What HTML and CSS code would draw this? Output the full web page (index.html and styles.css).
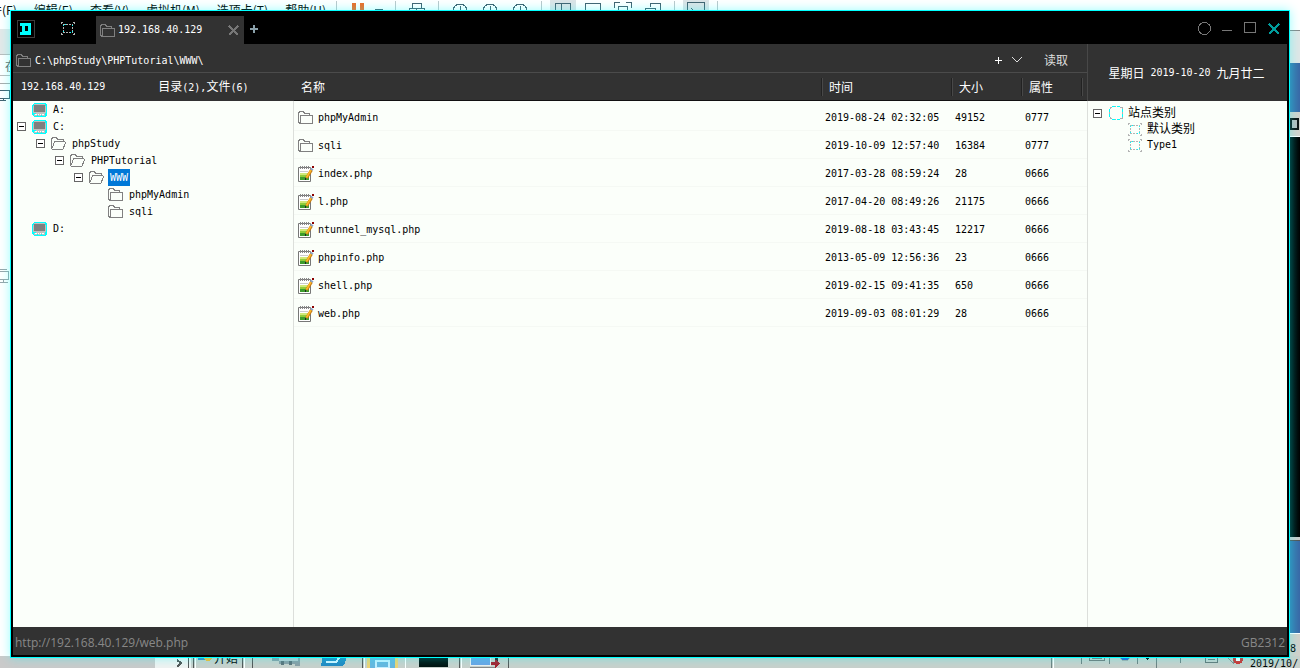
FILE: index.html
```html
<!DOCTYPE html>
<html lang="zh-CN">
<head>
<meta charset="utf-8">
<title>192.168.40.129</title>
<link rel="stylesheet" href="styles.css">
</head>
<body>
<svg class="sprite" aria-hidden="true">
  <symbol id="folder" viewBox="0 0 15 13"><path d="M0.5 11V2L2 .5H5L6.500 2H11.500V4.500M.5 11L2 12.500M2.500 4.500H14.500V12.500H2.500Z" fill="none" stroke="#808080"/></symbol>
  <symbol id="folder-open" viewBox="0 0 15 13"><path d="M.5 11.500V2L2 .5H5L6.500 2H12.500V4M3.500 4.500H13.500L14.500 5.500L12.500 11L11.500 12.500H1.500L.5 11.500L2.500 8Z" fill="none" stroke="#808080"/></symbol>
  <symbol id="drive" viewBox="0 0 15 14"><path d="M2 0H13L15 2V12L13 14H2L0 12V2Z" fill="#00ffff"/><path d="M2 1H13V3H14V10H13V13H2V10H1V3H2Z" fill="#c0c0c0"/><path d="M2 2H13V9H2Z" fill="#808080"/><path d="M3 11H5V12H3ZM6 11H7V12H6ZM8 11H9V12H8ZM10 11H12V12H10Z" fill="#fff"/><path d="M2 10H4V11H2ZM5 12H6V13H5ZM9 12H10V13H9Z" fill="#00ffff"/></symbol>
  <symbol id="site" viewBox="0 0 14 14"><path d="M3 .5H11M3 13.500H11M.5 3V11M13.500 3V11" stroke="#00ffff" stroke-dasharray="3 2"/><path d="M1 3V1.500H3M11 1.500H13V3M1 11V12.500H3M11 12.500H13V11M6 .5H7M6 13.500H7M.5 6V8M13.500 6V8" fill="none" stroke="#b0b0b0"/></symbol>
  <symbol id="group" viewBox="0 0 14 13"><path d="M2.500 2V11M11.500 2V11M2 2.500H12M2 10.500H12" fill="none" stroke="#b4b4b4" stroke-dasharray="2 1"/><path d="M0 .5H2M12 .5H14M0 12.500H2M12 12.500H14M0 1.500H1M13 1.500H14M0 11.500H1M13 11.500H14" stroke="#b4b4b4"/><path d="M2 3.500H3M2 9.500H3M11 3.500H12M11 9.500H12M4 2.500H5M9 10.500H10" stroke="#00ffff"/></symbol>
  <symbol id="file" viewBox="0 0 16 16"><path d="M.5 1.500H12.500V15.500H.5Z" fill="#fff" stroke="#777"/><path d="M2.500 0V3M4.500 0V3M6.500 0V3M8.500 0V3M10.500 0V3" stroke="#888"/><path d="M2 5.500H10" stroke="#ccc"/><path d="M2 7H11V14H2Z" fill="#d0e878"/><path d="M2 9H11V14H2Z" fill="#8fcc3c"/><path d="M2 11H11V14H2Z" fill="#3c9c2c"/><path d="M8.500 12L13.500 4" stroke="#c77b13" stroke-width="3"/><path d="M8.500 11.500L13 4" stroke="#ffb928" stroke-width="1.500"/><path d="M12.500 2.500L15 4" stroke="#8aa4c8" stroke-width="2"/><path d="M14 0H16V2H14Z" fill="#8b0000"/><path d="M7 12H8V14H7Z" fill="#222"/></symbol>
</svg>

<div class="backdrop">
  <div class="host-menu">
    <span>文件(F)</span><span>编辑(E)</span><span>查看(V)</span><span>虚拟机(M)</span><span>选项卡(T)</span><span>帮助(H)</span>
  </div>
  <svg class="host-tools" width="390" height="20" viewBox="0 0 390 20" fill="none" stroke="#42616f" aria-hidden="true">
    <path d="M214 0H240V12H214ZM347 0H373V12H347Z" fill="#dde3e6" stroke="none"/>
    <path d="M.5 1V15M59.500 1V15M102.500 1V15M205.500 1V15M338.500 1V15M381.500 1V15" stroke="#bcc7ca"/>
    <path d="M16 3H20V15H16ZM24 3H28V15H24Z" fill="#ef6c26" stroke="none"/>
    <path d="M39 9.500H47M76.500 8V3.500H85.500V8M73.500 15V8.500H88.500V15M80.500 8V15"/>
    <circle cx="124" cy="11" r="7"/><circle cx="154" cy="11" r="7"/><circle cx="184" cy="11" r="7"/>
    <path d="M124.500 6V12M154.500 6V12M184.500 6V12M219.500 15V3.500H234.500V15M225.500 3V15M249.500 15V3.500H264.500V15M278.500 8V2.500H284M290 2.500H295.500V8M282.500 15V6.500H291.500V15M314.500 7V3.500H324.500V15M309.500 15V8.500H319.500V15M351.500 15V2.500H368.500V15M355 8L359 12"/>
  </svg>
  <div class="host-left"><span>在</span>
    <svg width="10" height="18" viewBox="0 0 10 18" fill="none" stroke="#42616f" aria-hidden="true"><path d="M0 .5H10" stroke="#aaa"/><path d="M0 7.500H9.500V15.500H0M3.500 15V17M0 17.500H6"/></svg>
    <svg class="host-monitor" width="10" height="15" viewBox="0 0 10 15" fill="none" stroke="#98a5aa" aria-hidden="true"><path d="M0 .5H7M0 2.500H8.500V10.500H0M3.500 11V13M0 13.500H8"/></svg>
  </div>
  <div class="host-right">
    <i class="seg-light"></i><i class="seg-blue"></i><i class="seg-bar"></i><i class="seg-black"></i><i class="seg-edge"></i><i class="seg-blue-low"></i><i class="seg-tail">8</i>
  </div>
  <div class="taskbar">
    <i class="task-scroll"></i>
    <svg width="330" height="12" viewBox="0 0 330 12" aria-hidden="true">
      <path d="M0 0H36V12H0Z" fill="#f0f2f1"/><path d="M22 4L26 7L22 11" fill="none" stroke="#555" stroke-width="2"/>
      <path d="M33.500 0V12M38.500 0V12M87.500 0V12M97.500 0V12M207.500 0V12M304.500 0V12M353.500 0V12" stroke="#555"/>
      <path d="M40.500 0V12M89.500 0V12M209.500 0V12M250.500 0V12M306.500 0V12" stroke="#fff"/>
      <path d="M43 0H50V4H43Z" fill="#3a85c8"/><circle cx="53" cy="1" r="4" fill="#fcb827"/>
      <path d="M117 1H145V10H140V8H124V5H117Z" fill="#8b9da4"/><path d="M124 1H143V5H124Z" fill="#b9c7cc"/><path d="M126 5H129V9H126ZM134 5H137V9H134Z" fill="#5d7078"/>
      <path d="M168 0H192L190 7L187 10H166Z" fill="#2389c2"/><path d="M171 6H181L184 2" fill="none" stroke="#d4f2ff" stroke-width="2"/>
      <path d="M212 0H243V12H212Z" fill="#eed375"/><path d="M215 2H240V12H215Z" fill="#67b6df"/><path d="M221 5H234V12H221Z" fill="none" stroke="#c6efff" stroke-width="2"/>
      <path d="M264 0H293V11H264Z" fill="#00110f"/>
    </svg>
    <svg class="task-remote" width="60" height="12" viewBox="0 0 60 12" aria-hidden="true"><path d="M6.500 0H26.500V9.500H6.500Z" fill="#6ba4e4" stroke="#eee"/><path d="M6 11H32" stroke="#888"/><path d="M27 6H31V3L36 8L31 12V9H27Z" fill="#a61f2c"/><path d="M31 2L34 4" stroke="#222" stroke-width="2"/><path d="M44.500 0V12" stroke="#555"/></svg>
    <svg class="task-tray" width="200" height="12" viewBox="0 0 200 12" fill="none" aria-hidden="true"><path d="M2.500 0V12M32.500 0V8M60.500 0V8M88.500 0V8M107.500 0V12M131.500 0V7" stroke="#708080"/><path d="M4.500 0V12" stroke="#fff"/><path d="M40.500 0V4.500H55.500V0M43 2.500H53" stroke="#777"/><circle cx="76" cy="0" r="5" fill="#2a61d6" stroke="#aaa"/><path d="M96 1H101L98 4Z" fill="#000"/><path d="M156.500 0V6.500H168.500V0M159 3.500H166" stroke="#677"/><path d="M178 1L184 7V0" stroke="#888"/><circle cx="189" cy="3" r="5" fill="#d42f2d"/><path d="M187 1L191 5M191 1L187 5" stroke="#fff" stroke-width="2"/></svg>
    <span class="task-start">开始</span><span class="task-date">2019/10/</span>
  </div>
</div>

<div class="window">
  <header class="titlebar">
    <svg class="logo" width="18" height="18" viewBox="0 0 18 18" aria-hidden="true"><path d="M.5 .5H17.500V17.500H.5Z" fill="none" stroke="#3c3c3c"/><path d="M3 3H14V15H3V12H5V6H3Z" fill="#00ffff"/><path d="M8 6H11V11H8Z" fill="#000"/></svg>
    <button class="icon-btn home" aria-label="站点"><svg width="14" height="13"><use href="#group"/></svg></button>
    <div class="tab"><svg width="15" height="13" aria-hidden="true"><use href="#folder"/></svg><span>192.168.40.129</span><button class="icon-btn" aria-label="关闭标签"><svg width="11" height="11" viewBox="0 0 11 11"><path d="M1 1L10 10M10 1L1 10" stroke="#777" stroke-width="2"/></svg></button></div>
    <button class="icon-btn add-tab" aria-label="新标签"><svg width="8" height="8" viewBox="0 0 8 8"><path d="M4 0V8M0 4H8" stroke="#8aa0aa" stroke-width="2"/></svg></button>
    <div class="controls">
      <button class="icon-btn" aria-label="皮肤"><svg width="13" height="13" viewBox="0 0 13 13"><circle cx="6.500" cy="6.500" r="6" fill="none" stroke="#777"/></svg></button>
      <button class="icon-btn" aria-label="最小化"><svg width="10" height="13" viewBox="0 0 10 13"><path d="M0 8.500H10" stroke="#777"/></svg></button>
      <button class="icon-btn" aria-label="最大化"><svg width="12" height="13" viewBox="0 0 12 13"><path d="M.5 .5H11.500V10.500H.5Z" fill="none" stroke="#777"/></svg></button>
      <button class="icon-btn" aria-label="关闭"><svg width="12" height="12" viewBox="0 0 12 12"><path d="M1 1L11 11M11 1L1 11" stroke="#009c9c" stroke-width="2"/></svg></button>
    </div>
  </header>

  <div class="workspace">
    <main class="main">
      <form class="address">
        <svg width="15" height="13" aria-hidden="true"><use href="#folder"/></svg>
        <input type="text" aria-label="路径" value="C:\phpStudy\PHPTutorial\WWW\">
        <button type="button" class="icon-btn" aria-label="添加"><svg width="7" height="7" viewBox="0 0 7 7"><path d="M3.500 0V7M0 3.500H7" stroke="#fff"/></svg></button>
        <button type="button" class="icon-btn" aria-label="历史"><svg width="10" height="6" viewBox="0 0 10 6"><path d="M.5 .5L5 5L9.500 .5" fill="none" stroke="#ddd"/></svg></button>
        <button type="button" class="read">读取</button>
      </form>
      <div class="split">
        <section class="tree-pane">
          <div class="summary"><span>192.168.40.129</span><span class="counts"><b>目录</b>(2),<b>文件</b>(6)</span></div>
          <ul class="tree">
            <li><div class="node"><i class="no-toggle"></i><svg width="15" height="14"><use href="#drive"/></svg><span>A:</span></div></li>
            <li><div class="node"><button class="toggle" aria-label="折叠"></button><svg width="15" height="14"><use href="#drive"/></svg><span>C:</span></div>
              <ul><li><div class="node"><button class="toggle" aria-label="折叠"></button><svg width="15" height="13"><use href="#folder-open"/></svg><span>phpStudy</span></div>
                <ul><li><div class="node"><button class="toggle" aria-label="折叠"></button><svg width="15" height="13"><use href="#folder-open"/></svg><span>PHPTutorial</span></div>
                  <ul><li><div class="node"><button class="toggle" aria-label="折叠"></button><svg width="15" height="13"><use href="#folder-open"/></svg><span class="selected">WWW</span></div>
                    <ul>
                      <li><div class="node"><i class="no-toggle"></i><svg width="15" height="13"><use href="#folder"/></svg><span>phpMyAdmin</span></div></li>
                      <li><div class="node"><i class="no-toggle"></i><svg width="15" height="13"><use href="#folder"/></svg><span>sqli</span></div></li>
                    </ul></li></ul></li></ul></li></ul></li>
            <li><div class="node"><i class="no-toggle"></i><svg width="15" height="14"><use href="#drive"/></svg><span>D:</span></div></li>
          </ul>
        </section>
        <section class="file-pane">
          <table class="files">
            <colgroup><col><col class="col-time"><col class="col-size"><col class="col-attr"><col class="col-end"></colgroup>
            <thead><tr><th>名称</th><th>时间</th><th>大小</th><th>属性</th><th></th></tr></thead>
            <tbody>
              <tr><td><span class="name"><svg class="dir" width="15" height="13"><use href="#folder"/></svg>phpMyAdmin</span></td><td>2019-08-24 02:32:05</td><td>49152</td><td>0777</td><td></td></tr>
              <tr><td><span class="name"><svg class="dir" width="15" height="13"><use href="#folder"/></svg>sqli</span></td><td>2019-10-09 12:57:40</td><td>16384</td><td>0777</td><td></td></tr>
              <tr><td><span class="name"><svg class="doc" width="16" height="16"><use href="#file"/></svg>index.php</span></td><td>2017-03-28 08:59:24</td><td>28</td><td>0666</td><td></td></tr>
              <tr><td><span class="name"><svg class="doc" width="16" height="16"><use href="#file"/></svg>l.php</span></td><td>2017-04-20 08:49:26</td><td>21175</td><td>0666</td><td></td></tr>
              <tr><td><span class="name"><svg class="doc" width="16" height="16"><use href="#file"/></svg>ntunnel_mysql.php</span></td><td>2019-08-18 03:43:45</td><td>12217</td><td>0666</td><td></td></tr>
              <tr><td><span class="name"><svg class="doc" width="16" height="16"><use href="#file"/></svg>phpinfo.php</span></td><td>2013-05-09 12:56:36</td><td>23</td><td>0666</td><td></td></tr>
              <tr><td><span class="name"><svg class="doc" width="16" height="16"><use href="#file"/></svg>shell.php</span></td><td>2019-02-15 09:41:35</td><td>650</td><td>0666</td><td></td></tr>
              <tr><td><span class="name"><svg class="doc" width="16" height="16"><use href="#file"/></svg>web.php</span></td><td>2019-09-03 08:01:29</td><td>28</td><td>0666</td><td></td></tr>
            </tbody>
          </table>
        </section>
      </div>
    </main>
    <aside class="side">
      <div class="date"><b>星期日</b> 2019-10-20 <b>九月廿二</b></div>
      <ul class="tree sites">
        <li><div class="node"><button class="toggle" aria-label="折叠"></button><svg width="14" height="14"><use href="#site"/></svg><span><b>站点类别</b></span></div>
          <ul>
            <li><div class="node"><i class="no-toggle"></i><svg width="14" height="13"><use href="#group"/></svg><span><b>默认类别</b></span></div></li>
            <li><div class="node"><i class="no-toggle"></i><svg width="14" height="13"><use href="#group"/></svg><span>Type1</span></div></li>
          </ul></li>
      </ul>
    </aside>
  </div>
  <footer class="status"><span>http://192.168.40.129/web.php</span><span>GB2312</span></footer>
</div>
</body>
</html>
```
FILE: styles.css
```css
* { box-sizing: border-box; }
body {
  margin: 0;
  height: 100vh;
  overflow: hidden;
  position: relative;
  background: #fff;
  color: #000;
  font: 10px/16px "DejaVu Sans Mono", "Noto Sans CJK SC", monospace;
}
b { font: 12px/16px "Noto Sans CJK SC", sans-serif; }
i { font-style: normal; display: block; }
ul { list-style: none; margin: 0; padding: 0; }
svg { display: block; flex: none; shape-rendering: crispEdges; }
.sprite { position: absolute; width: 0; height: 0; }
.icon-btn { display: flex; padding: 0; border: 0; background: none; }

/* Desktop behind the window */
.backdrop { position: absolute; inset: 0; overflow: hidden; }
.host-menu {
  position: absolute; top: 1px; left: -22px;
  display: flex; gap: 17px;
  font: 12px/18px "Noto Sans CJK SC", sans-serif;
  white-space: nowrap;
}
.host-tools { position: absolute; top: 0; left: 336px; }
.host-left {
  position: absolute; top: 29px; left: 0; width: 10px; height: 71px;
  padding-top: 25px;
  background: linear-gradient(#e4e8e8 25px, #fff 25px);
}
.host-left span { display: block; height: 22px; padding-left: 5px; border-top: 1px solid #bbb; border-bottom: 1px solid #bbb; color: #666; font: 12px/22px "Noto Sans CJK SC", sans-serif; }
.host-left svg { margin-top: 7px; }
.host-left .host-monitor { position: absolute; top: 233px; left: 0; }
.host-right {
  position: absolute; inset: 30px 0 0 auto; width: 10px;
  display: flex; flex-direction: column;
}
.seg-light { height: 33px; border-top: 1px solid #888; background: #e0e6e6; }
.seg-blue { height: 25px; flex: 0 0 25px; background: #3970a8; }
.seg-bar { height: 24px; border: solid #d5d2cc; border-width: 6px 1px 6px 0; background: #bbb; box-shadow: inset 0 0 0 2px #111; }
.seg-blue { height: 49px; flex: 0 0 49px; background: linear-gradient(90deg, #3a7cb0, #3a68a6); }
.seg-black { flex: 1; margin-top: 1px; background: linear-gradient(90deg, #001c1c, #000); }
.seg-edge { height: 4px; background: #ccc; border-bottom: 1px solid #555; }
.seg-blue-low { height: 92px; background: linear-gradient(90deg, #3a7cb0, #3a68a6); }
.seg-tail { height: 35px; padding-top: 7px; background: #d3d0ca; border-top: 1px solid #fff; }
.taskbar { position: absolute; inset: auto 0 0 0; height: 12px; display: flex; background: #c9d0cb; }
.task-scroll { flex: none; width: 155px; background: #cacaca; }
.task-remote { position: absolute; left: 464px; }
.task-tray { position: absolute; left: 1049px; }
.task-start { position: absolute; left: 214px; bottom: 2px; font: 12px/16px "Noto Sans CJK SC", sans-serif; }
.task-date { position: absolute; left: 1250px; bottom: -4px; }

/* Window */
.window {
  position: absolute; inset: 10px;
  display: flex; flex-direction: column;
  padding: 0 2px 2px;
  border: 1px solid #00ffff;
  background: #000;
  box-shadow: 0 0 10px #00ffff66;
}
.titlebar { display: flex; align-items: center; height: 33px; padding: 2px 7px 0 4px; }
.home { margin: 0 21px 0 26px; }
.tab { align-self: stretch; display: flex; align-items: center; gap: 3px; width: 148px; margin-top: 3px; padding: 0 5px 0 4px; background: #323232; color: #fff; }
.tab .icon-btn { margin-left: auto; }
.add-tab { margin-left: 6px; }
.controls { display: flex; align-items: center; gap: 12px; margin-left: auto; }
.controls .icon-btn:first-child { margin-right: -1px; }
.workspace { flex: 1; min-height: 0; display: flex; background: #fbfffa; }
.main { flex: 1; min-width: 0; display: flex; flex-direction: column; }
.address { display: flex; align-items: center; height: 29px; padding: 4px 17px 0 3px; border-bottom: 1px solid #4b4b4b; background: #323232; }
.address input { flex: 1; min-width: 0; height: 20px; padding: 0 4px; border: 0; outline: 0; background: none; color: #fff; font: inherit; }
.address .icon-btn + .icon-btn { margin-left: 10px; }
.read { margin-left: 20px; padding: 0 2px; border: 0; background: none; color: #ddd; font: 12px/16px "Noto Sans CJK SC", sans-serif; }
.split { flex: 1; display: flex; min-height: 0; }
.tree-pane { width: 281px; border-right: 1px solid #dcdfdb; }
.summary { display: flex; align-items: center; height: 28px; margin-right: -1px; padding-left: 8px; background: #323232; color: #fff; }
.summary .counts { margin-left: 53px; }
.node { display: flex; align-items: center; height: 17px; padding-left: 4px; }
.node > span { margin-left: 4px; padding: 0 2px; line-height: 17px; }
.node > .selected { background: #0078d7; color: #fff; }
.tree ul { padding-left: 19px; }
.toggle, .no-toggle { flex: none; width: 9px; height: 9px; margin: 0 6px 0 0; padding: 0; }
.toggle { border: 1px solid #666; background: linear-gradient(#000, #000) center / 5px 1px no-repeat #fff; }
.file-pane { flex: 1; min-width: 0; }
.files { width: 100%; table-layout: fixed; border-spacing: 0; }
.col-time { width: 130px; }
.col-size { width: 70px; }
.col-attr { width: 60px; }
.col-end { width: 6px; }
.files th {
  height: 28px; padding: 0 8px;
  border-bottom: 1px solid #111;
  background: linear-gradient(#222, #222) left / 1px 18px no-repeat, linear-gradient(#484848, #484848) 1px center / 1px 18px no-repeat #323232;
  color: #fff; text-align: left;
  font: 12px/16px "Noto Sans CJK SC", sans-serif;
}
.files th:first-child { padding-left: 7px; background: #323232; }
.files th:last-child, .files td:last-child { padding: 0; }
.files tbody::before { content: ""; display: block; height: 2px; }
.files td { height: 28px; padding: 2px 4px 0; border-bottom: 1px solid #f5f9f4; white-space: nowrap; }
.name { display: flex; align-items: center; gap: 4px; }
.name .dir { margin-right: 1px; }
.name .doc { shape-rendering: auto; }
.side { width: 200px; border-left: 1px solid #dcdfdb; }
.date { display: flex; gap: 6px; align-items: center; justify-content: center; height: 57px; margin-left: -1px; padding: 1px 2px 0 0; border-left: 1px solid #484848; background: #323232; color: #fff; }
.sites { padding-top: 4px; }
.sites .node { height: 16px; padding-left: 5px; }
.sites .toggle, .sites .no-toggle { margin-right: 7px; }
.sites .node > span { margin-left: 3px; line-height: 16px; }
.status { display: flex; align-items: center; justify-content: space-between; height: 28px; padding: 4px 2px 0; background: #323232; color: #888; font: 12px/16px "Open Sans", sans-serif; }
```
